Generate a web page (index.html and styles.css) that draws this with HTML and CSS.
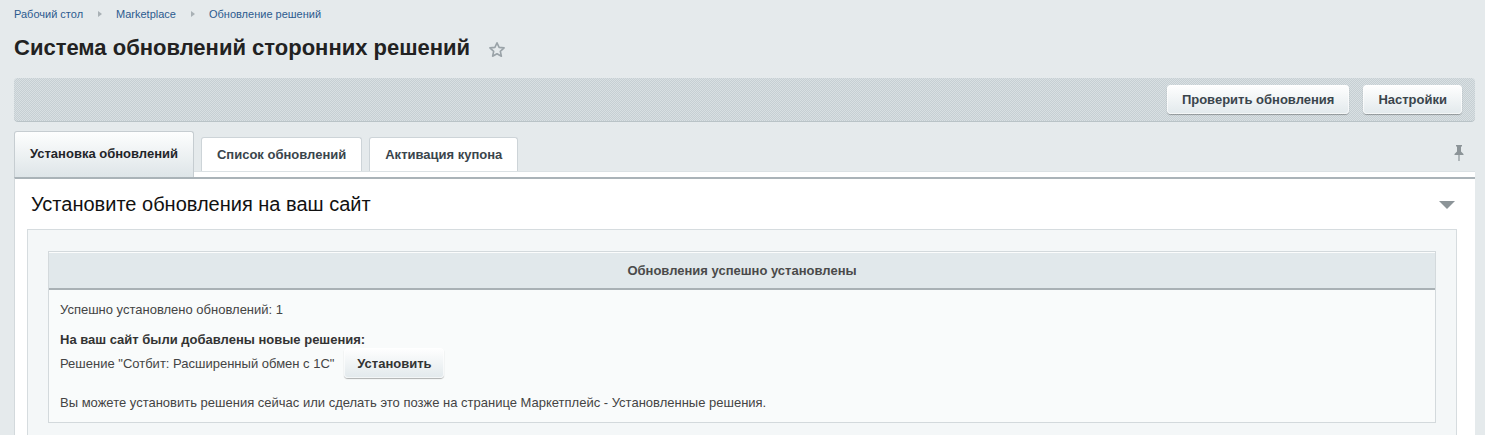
FILE: index.html
```html
<!DOCTYPE html>
<html lang="ru">
<head>
<meta charset="utf-8">
<title>Система обновлений сторонних решений</title>
<link rel="stylesheet" href="styles.css">
</head>
<body>
<div class="page">
  <nav class="crumbs">
    <a class="crumb">Рабочий стол</a>
    <span class="sep"></span>
    <a class="crumb">Marketplace</a>
    <span class="sep"></span>
    <a class="crumb">Обновление решений</a>
  </nav>
  <div class="title-row">
    <h1 class="title">Система обновлений сторонних решений</h1>
    <svg class="star" width="18" height="18" viewBox="0 0 18 18"><path d="M9 1.8l2.1 4.6 5 .5-3.8 3.4 1.1 4.9L9 12.7l-4.4 2.5 1.1-4.9L1.9 6.9l5-.5z" fill="none" stroke="#9aa3a8" stroke-width="1.6" stroke-linejoin="round"/></svg>
  </div>
  <div class="toolbar">
    <button class="btn">Проверить обновления</button>
    <button class="btn">Настройки</button>
  </div>
  <div class="tabs">
    <div class="tab active">Установка обновлений</div>
    <div class="tab">Список обновлений</div>
    <div class="tab">Активация купона</div>
    <div class="tabs-fill"></div>
    <svg class="pin" width="12" height="18" viewBox="0 0 12 18"><path d="M3 1h6v1.5H8v5l2.5 2.5v1H6.6V17h-1.2v-6H1.5v-1L4 7.5v-5H3z" fill="#8c9498"/></svg>
  </div>
  <div class="panel">
    <div class="panel-head">
      <h2 class="panel-title">Установите обновления на ваш сайт</h2>
      <span class="collapse"></span>
    </div>
    <div class="inner">
      <div class="msg">
        <div class="msg-head">Обновления успешно установлены</div>
        <div class="msg-body">
          <p class="line">Успешно установлено обновлений: 1</p>
          <p class="line bold">На ваш сайт были добавлены новые решения:</p>
          <div class="solution">
            <span>Решение "Сотбит: Расширенный обмен с 1С"</span>
            <button class="btn install">Установить</button>
          </div>
          <p class="line note">Вы можете установить решения сейчас или сделать это позже на странице Маркетплейс - Установленные решения.</p>
        </div>
      </div>
    </div>
  </div>
</div>
</body>
</html>
```

FILE: styles.css
```css
* { box-sizing: border-box; }
html, body { margin: 0; padding: 0; }
body {
  background: #e5eaec;
  font-family: "Liberation Sans", Arial, sans-serif;
  color: #333;
  height: 435px;
  overflow: hidden;
}
.page { padding: 0 10px 0 14px; }

.crumbs {
  display: flex;
  align-items: center;
  height: 29px;
  padding-bottom: 1px;
  font-size: 11px;
}
.crumb { color: #2c5b8f; text-decoration: none; }
.sep {
  width: 0; height: 0;
  border-left: 4px solid #a9b1b5;
  border-top: 3px solid transparent;
  border-bottom: 3px solid transparent;
  margin: 0 14px 0 15px;
}

.title-row {
  display: flex;
  align-items: center;
  height: 38px;
  margin-bottom: 11px;
}
.title {
  margin: 0;
  font-size: 22px;
  font-weight: bold;
  color: #222;
}
.star { margin-left: 18px; margin-top: 3px; }

.toolbar {
  display: flex;
  justify-content: flex-end;
  align-items: center;
  gap: 14px;
  height: 44px;
  padding: 0 13px 1px 0;
  border-radius: 4px;
  background-color: #d3dbdf;
  background-image: repeating-conic-gradient(#c6cfd3 0 25%, #d9e0e3 0 50%);
  background-size: 2px 2px;
  box-shadow: inset 0 -1px 0 #b9c3c7;
}
.btn {
  font-family: "Liberation Sans", Arial, sans-serif;
  font-size: 13px;
  font-weight: bold;
  color: #3a454c;
  height: 29px;
  padding: 0 15px;
  border: 0;
  border-radius: 4px;
  background: linear-gradient(#ffffff, #e2e9ec);
  box-shadow: 0 1px 1px rgba(0,0,0,0.3), 0 0 0 1px rgba(255,255,255,0.6) inset;
}

.tabs {
  display: flex;
  align-items: flex-end;
  gap: 7px;
  margin-top: 9px;
  height: 46px;
  background: linear-gradient(to bottom, transparent 40px, #dbe1e4 40px, #dbe1e4 41px, #fff 41px);
}
.tab {
  font-size: 13px;
  font-weight: bold;
  color: #3a454c;
  white-space: nowrap;
  height: 34px;
  margin-bottom: 6px;
  padding: 0 15px;
  display: flex;
  align-items: center;
  background: #fff;
  border: 1px solid #cdd4d8;
  border-bottom: 0;
  border-radius: 3px 3px 0 0;
}
.tab.active {
  height: 46px;
  margin-bottom: 0;
  padding: 0 15px 2px;
  color: #1f2529;
  background: linear-gradient(#fdfefe, #dee5e8);
  border-color: #c6cdd1;
}
.tabs-fill { flex: 1; }
.pin { align-self: flex-start; margin: 13px 10px 0 0; }

.panel {
  background: #fff;
  border-top: 2px solid #aab3b8;
  border-left: 1px solid #d3d9dc;
  width: 1461px;
  padding: 0 18px 0 12px;
}
.panel-head {
  display: flex;
  align-items: center;
  justify-content: space-between;
  height: 50px;
  padding: 0 2px 0 4px;
}
.panel-title {
  margin: 0;
  font-size: 20px;
  font-weight: normal;
  color: #111;
}
.collapse {
  width: 0; height: 0;
  border-top: 8px solid #8c9498;
  border-left: 8px solid transparent;
  border-right: 8px solid transparent;
  margin-top: 2px;
}

.inner {
  background: #f4f7f8;
  border: 1px solid #d6dcdf;
  padding: 21px 20px 20px;
}
.msg {
  border: 1px solid #d3d9dc;
  background: #f9fbfb;
}
.msg-head {
  height: 38px;
  display: flex;
  align-items: center;
  justify-content: center;
  background: #e1e8eb;
  border-top: 1px solid #fbfcfc;
  border-bottom: 2px solid #a9b1b5;
  font-size: 13px;
  font-weight: bold;
  color: #4a4a4a;
}
.msg-body {
  padding: 12px 11px 11px;
  font-size: 13px;
  color: #444;
}
.line { margin: 0; line-height: 16px; }
.bold { font-weight: bold; color: #333; margin-top: 14px; }
.solution {
  display: flex;
  align-items: center;
  gap: 10px;
}
.install {
  width: 100px;
  height: 30px;
  padding: 0;
  color: #333;
}
.note { margin-top: 17px; }
```
